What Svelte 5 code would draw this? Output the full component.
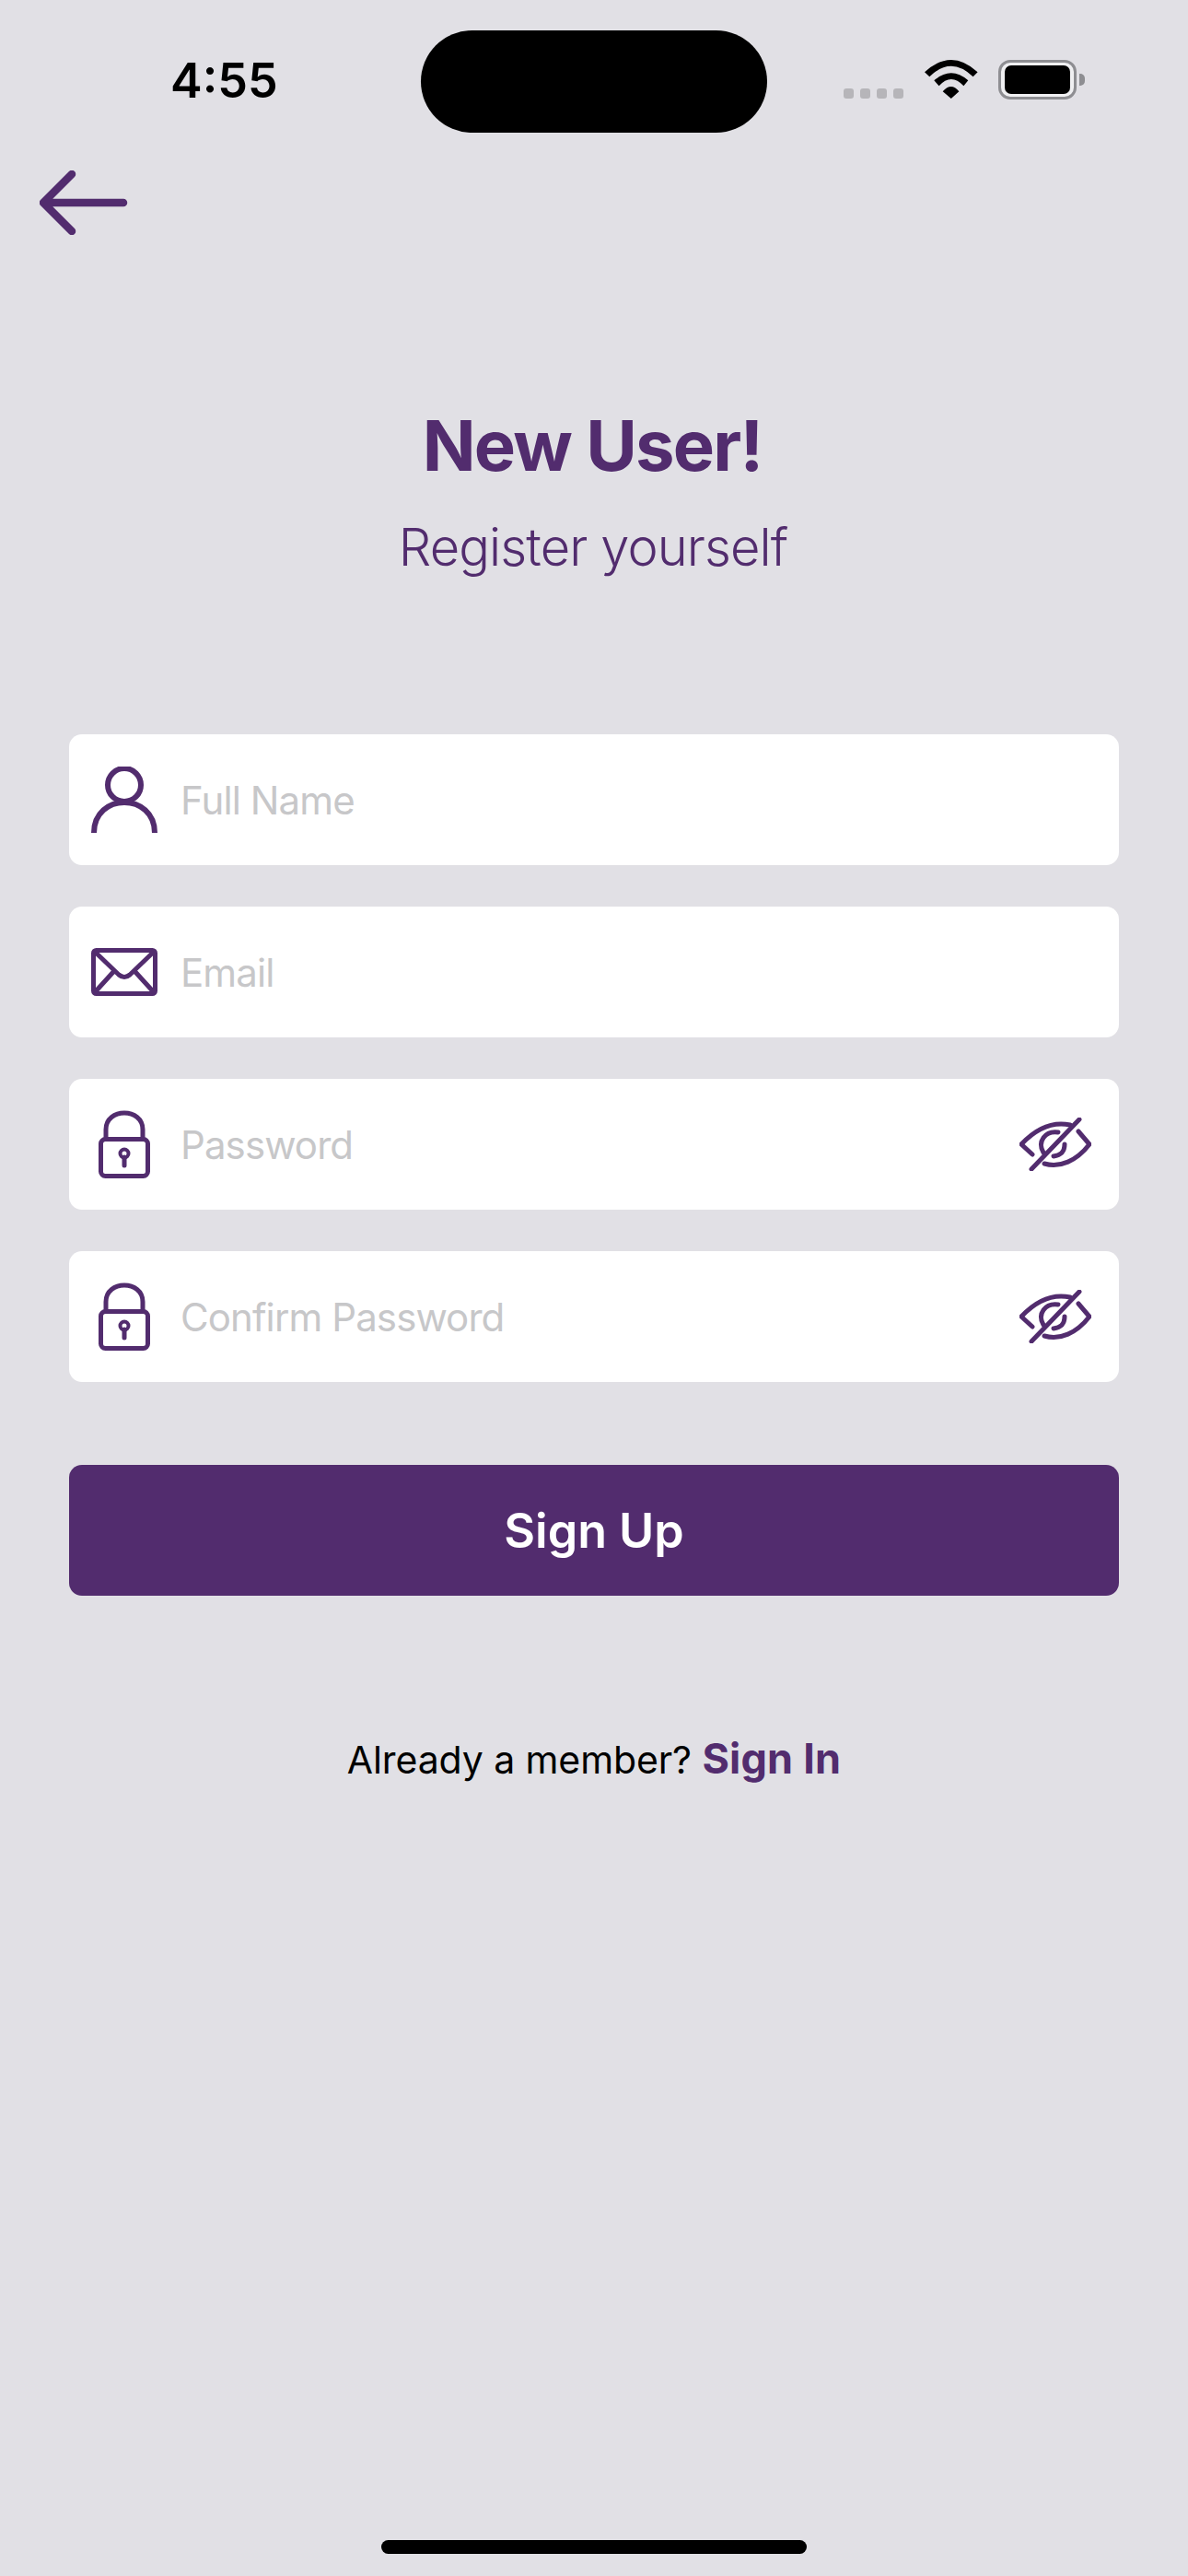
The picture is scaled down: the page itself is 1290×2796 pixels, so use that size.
<script>
  const fields = [
    { label: "Full Name", icon: "user", type: "text" },
    { label: "Email", icon: "mail", type: "email" },
    { label: "Password", icon: "lock", type: "password", toggle: true },
    { label: "Confirm Password", icon: "lock", type: "password", toggle: true },
  ];
</script>

<div class="screen">
  <div class="status">
    <span class="time">4:55</span>
    <div class="island"></div>
    <div class="signal">
      <i></i><i></i><i></i><i></i>
    </div>
    <svg class="wifi" width="58" height="42" viewBox="0 0 58 42">
      <path d="M0 13.3Q28.8 -13.3 57.6 13.3L52.6 18.3Q28.8 -4.9 5.3 18.3Z" />
      <path d="M10.3 22.3Q28.8 6.3 47.3 22.3L42.4 28.3Q28.8 13.7 15.6 28.3Z" />
      <path d="M19.7 34.3Q28.8 23.7 37.4 34.3L28.8 42Z" />
    </svg>
    <div class="battery">
      <div class="battery-body"><div class="battery-fill"></div></div>
      <div class="battery-nub"></div>
    </div>
  </div>

  <button class="back" aria-label="Back">
    <svg width="96" height="70" viewBox="0 0 96 70" fill="none">
      <path d="M4 35H91M35 4L4 35L35 66" />
    </svg>
  </button>

  <div class="heading">
    <h1>New User!</h1>
    <p>Register yourself</p>
  </div>

  <form class="form">
    {#each fields as field}
      <label class="field">
        <span class="icon">
          {#if field.icon === "user"}
            <svg width="72" height="72" viewBox="0 0 72 72" fill="none" stroke-width="6">
              <circle cx="36" cy="20" r="18" />
              <path d="M3 72C3 28 69 28 69 72" />
            </svg>
          {:else if field.icon === "mail"}
            <svg width="72" height="52" viewBox="0 0 72 52" fill="none" stroke-width="5">
              <rect x="2.5" y="2.5" width="67" height="47" rx="3" />
              <path d="M4 4L30 29Q36 34 42 29L68 4M24 26L4 48M48 26L68 48" />
            </svg>
          {:else}
            <svg width="56" height="74" viewBox="0 0 56 74" fill="none" stroke-width="5">
              <rect x="2.5" y="31.5" width="51" height="40" rx="5" />
              <path d="M8 31V21C8 -3 48 -3 48 21V31" />
              <circle cx="28" cy="47" r="4.5" stroke-width="4" />
              <path d="M28 51V60" stroke-linecap="round" />
            </svg>
          {/if}
        </span>
        <input type={field.type} placeholder={field.label} />
        {#if field.toggle}
          <svg class="eye" width="78" height="58" viewBox="0 0 78 58" fill="none" stroke-width="5" stroke-linecap="round">
            <path d="M55 8C36 4 18 12 2 29L14 40" />
            <path d="M64 15L76 29C62 47 44 55 27 50" />
            <path d="M26 38C19 26 28 14 42 16" />
            <path d="M49 29C49 38 44 41 37 42" />
            <path d="M65 2L13 56" />
          </svg>
        {/if}
      </label>
    {/each}

    <button class="submit" type="button">Sign Up</button>
  </form>

  <p class="member">Already a member? <a href="/signin">Sign In</a></p>

  <div class="home-bar"></div>
</div>

<style>
  :global(body) {
    margin: 0;
    background: #e1e0e5;
  }

  .screen {
    height: 2796px;
    box-sizing: border-box;
    display: flex;
    flex-direction: column;
    background: #e1e0e5;
    font-family: Inter, "Liberation Sans", sans-serif;
    color: #522c6e;
  }

  /* status bar */
  .status {
    display: flex;
    align-items: flex-start;
    height: 144px;
    padding: 33px 0 0 185px;
    box-sizing: border-box;
  }

  .time {
    width: 272px;
    margin-top: 25px;
    font-size: 52px;
    line-height: 60px;
    font-weight: 600;
    color: #000;
  }

  .island {
    width: 376px;
    height: 111px;
    border-radius: 56px;
    background: #000;
  }

  .signal {
    display: flex;
    gap: 7px;
    margin: 63px 0 0 83px;
  }

  .signal i {
    width: 11px;
    height: 11px;
    border-radius: 3px;
    background: #b6b5b9;
  }

  .wifi {
    margin: 32px 0 0 23px;
    fill: #000;
  }

  .battery {
    display: flex;
    align-items: center;
    margin: 32px 0 0 22px;
  }

  .battery-body {
    width: 85px;
    height: 43px;
    box-sizing: border-box;
    padding: 3px 4px;
    border: 3px solid #8e8e92;
    border-radius: 13px;
    background: #f0f0f2;
  }

  .battery-fill {
    height: 100%;
    border-radius: 7px;
    background: #000;
  }

  .battery-nub {
    width: 6px;
    height: 13px;
    margin-left: 3px;
    border-radius: 0 5px 5px 0;
    background: #8e8e92;
  }

  /* back */
  .back {
    align-self: flex-start;
    margin: 41px 0 0 43px;
    padding: 0;
    border: none;
    background: none;
    line-height: 0;
  }

  .back svg {
    stroke: #522c6e;
    stroke-width: 8.5;
    stroke-linecap: round;
    stroke-linejoin: round;
  }

  .heading {
    margin-top: 182px;
    text-align: center;
  }

  h1 {
    margin: 0 4px 0 0;
    font-size: 76px;
    line-height: 92px;
    font-weight: 700;
    letter-spacing: -1.8px;
  }

  .heading p {
    margin: 33px 2px 0 0;
    font-size: 56px;
    line-height: 64px;
    font-weight: 300;
    letter-spacing: -0.9px;
  }

  /* form */
  .form {
    display: flex;
    flex-direction: column;
    gap: 45px;
    margin: 171px 75px 0;
  }

  .field {
    display: flex;
    align-items: center;
    height: 142px;
    padding-right: 30px;
    border-radius: 14px;
    background: #fff;
  }

  .icon {
    flex: none;
    display: flex;
    justify-content: center;
    width: 72px;
    margin: 0 25px 0 24px;
  }

  .icon svg,
  .eye {
    stroke: #522c6e;
    flex: none;
  }

  input {
    flex: 1;
    min-width: 0;
    padding: 0;
    border: none;
    outline: none;
    background: none;
    font-family: inherit;
    font-size: 42px;
    letter-spacing: -0.9px;
  }

  input::placeholder {
    color: #c7c7c9;
    opacity: 1;
  }

  .submit {
    height: 142px;
    margin-top: 45px;
    border: none;
    border-radius: 14px;
    background: #522c6e;
    color: #fff;
    font-family: inherit;
    font-size: 52px;
    font-weight: 600;
  }

  .member {
    margin: 151px 0 0;
    text-align: center;
    font-size: 41px;
    line-height: 52px;
    letter-spacing: -0.1px;
    color: #000;
  }

  .member a {
    color: #522c6e;
    font-weight: 700;
    font-size: 45px;
    letter-spacing: 0.2px;
    text-decoration: none;
  }

  .home-bar {
    width: 462px;
    height: 15px;
    margin: auto auto 24px;
    border-radius: 8px;
    background: #000;
  }
</style>
